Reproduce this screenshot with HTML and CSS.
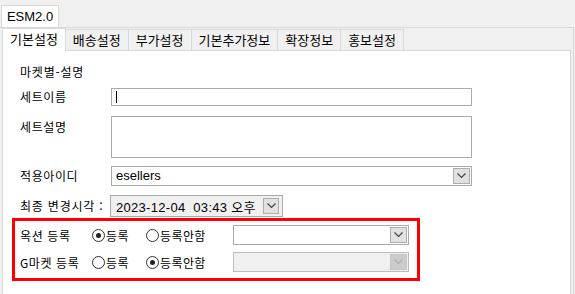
FILE: index.html
```html
<!DOCTYPE html>
<html lang="ko">
<head>
  <meta charset="UTF-8">
  <title>ESM2.0 - 기본설정</title>
  <link rel="stylesheet" href="styles.css">
</head>
<body>
  <div class="outer-tabs">
    <div class="outer-tab">ESM2.0</div>
  </div>

  <div class="outer-pane">
    <div class="tabs">
      <div class="tab active">기본설정</div>
      <div class="tab">배송설정</div>
      <div class="tab">부가설정</div>
      <div class="tab">기본추가정보</div>
      <div class="tab">확장정보</div>
      <div class="tab last">홍보설정</div>
    </div>

    <div class="pane">
      <div class="row title">마켓별-설명</div>

      <div class="row gap-8">
        <div class="label">세트이름</div>
        <div class="textbox"><span class="caret"></span></div>
      </div>

      <div class="row gap-10 top">
        <div class="label">세트설명</div>
        <div class="textarea"></div>
      </div>

      <div class="row gap-8">
        <div class="label">적용아이디</div>
        <div class="combo wide">
          <span class="combo-text">esellers</span>
          <span class="combo-btn">
            <svg width="9" height="6" viewBox="0 0 9 6"><polyline points="0.5,0.5 4.5,4.5 8.5,0.5" fill="none" stroke="#444" stroke-width="1.2"/></svg>
          </span>
        </div>
      </div>

      <div class="row gap-9">
        <div class="label short">최종 변경시각 :</div>
        <div class="datebox">
          <span class="date-text">2023-12-04  03:43 오후</span>
          <span class="combo-btn small">
            <svg width="9" height="6" viewBox="0 0 9 6"><polyline points="0.5,0.5 4.5,4.5 8.5,0.5" fill="none" stroke="#444" stroke-width="1.2"/></svg>
          </span>
        </div>
      </div>

      <div class="group">
        <div class="group-row">
          <div class="group-label">옥션 등록</div>
          <label class="radio first"><input type="radio" name="auction" checked>등록</label>
          <label class="radio second"><input type="radio" name="auction">등록안함</label>
          <div class="combo narrow">
            <span class="combo-text"></span>
            <span class="combo-btn">
              <svg width="9" height="6" viewBox="0 0 9 6"><polyline points="0.5,0.5 4.5,4.5 8.5,0.5" fill="none" stroke="#444" stroke-width="1.2"/></svg>
            </span>
          </div>
        </div>
        <div class="group-row">
          <div class="group-label">G마켓 등록</div>
          <label class="radio first"><input type="radio" name="gmarket">등록</label>
          <label class="radio second"><input type="radio" name="gmarket" checked>등록안함</label>
          <div class="combo narrow disabled">
            <span class="combo-text"></span>
            <span class="combo-btn">
              <svg width="9" height="6" viewBox="0 0 9 6"><polyline points="0.5,0.5 4.5,4.5 8.5,0.5" fill="none" stroke="#b0b0b0" stroke-width="1.2"/></svg>
            </span>
          </div>
        </div>
      </div>
    </div>
  </div>
</body>
</html>
```

FILE: styles.css
```css
body {
  margin: 0;
  width: 575px;
  height: 294px;
  overflow: hidden;
  background-color: #f0f0f0;
  font-family: "Liberation Sans", "Noto Sans CJK KR", sans-serif;
  font-size: 12px;
  color: #000;
}
.outer-tabs {
  display: flex;
  padding: 5px 0 0 1px;
}
.outer-tab {
  width: 56px;
  height: 21px;
  line-height: 21px;
  text-align: center;
  font-size: 13px;
  background-color: #fff;
  border: 1px solid #d9d9d9;
  border-bottom: none;
}
.outer-pane {
  height: 266px;
  margin-right: 1px;
  padding-left: 2px;
  border-top: 1px solid #d9d9d9;
  border-right: 1px solid #d9d9d9;
}
.tabs {
  display: flex;
  align-items: flex-end;
  height: 22px;
}
.tab {
  height: 20px;
  line-height: 20px;
  padding: 0 7px;
  border-top: 1px solid #d9d9d9;
  border-left: 1px solid #d9d9d9;
  font-family: "Noto Sans CJK KR", sans-serif;
  font-size: 13px;
}
.tab.last {
  border-right: 1px solid #d9d9d9;
}
.tab.active {
  position: relative;
  height: 22px;
  line-height: 19px;
  margin-bottom: -1px;
  padding: 0 7px;
  background-color: #fff;
  border-right: 1px solid #d9d9d9;
}
.tab.active + .tab {
  border-left: none;
}
.pane {
  height: 232px;
  margin-right: 2px;
  padding: 11px 0 0 9px;
  background-color: #fff;
  border: 1px solid #d9d9d9;
  border-bottom: none;
}
.row {
  display: flex;
  align-items: center;
  padding-left: 8px;
}
.row.top {
  align-items: flex-start;
}
.row.title {
  height: 18px;
  font-family: "Noto Sans CJK KR", sans-serif;
  letter-spacing: 0.8px;
}
.gap-8 { margin-top: 8px; }
.gap-9 { margin-top: 9px; }
.gap-10 { margin-top: 10px; }
.label {
  width: 91px;
  flex-shrink: 0;
  line-height: 18px;
  font-family: "Noto Sans CJK KR", sans-serif;
  letter-spacing: 0.6px;
}
.row.top .label {
  padding-top: 2px;
}
.label.short {
  width: 90px;
  letter-spacing: 0.8px;
}
.textbox {
  display: flex;
  align-items: center;
  box-sizing: border-box;
  width: 361px;
  height: 18px;
  padding-left: 4px;
  border: 1px solid #ababab;
}
.caret {
  width: 1px;
  height: 12px;
  background-color: #000;
}
.textarea {
  box-sizing: border-box;
  width: 361px;
  height: 42px;
  border: 1px solid #ababab;
}
.combo {
  display: flex;
  align-items: center;
  box-sizing: border-box;
  height: 20px;
  padding: 1px;
  background-color: #fff;
  border: 1px solid #ababab;
}
.combo.wide { width: 361px; }
.combo.narrow { width: 176px; }
.combo.disabled {
  background-color: #f0f0f0;
  border-color: #bcbcbc;
}
.combo-text {
  flex: 1;
  padding-left: 3px;
  font-size: 13px;
  line-height: 16px;
}
.combo-btn {
  display: flex;
  align-items: center;
  justify-content: center;
  box-sizing: border-box;
  width: 17px;
  height: 16px;
  background-color: #e1e1e1;
  border: 1px solid #adadad;
}
.combo.disabled .combo-btn {
  background-color: #cccccc;
  border-color: #c4c4c4;
}
.datebox {
  display: flex;
  align-items: center;
  box-sizing: border-box;
  width: 173px;
  height: 22px;
  padding-right: 3px;
  background-color: #f0f0f0;
  border: 1px solid #ababab;
}
.date-text {
  flex: 1;
  padding-left: 5px;
  font-size: 13px;
  letter-spacing: 0.3px;
  white-space: pre;
}
.combo-btn.small {
  width: 16px;
  height: 16px;
}
.group {
  box-sizing: border-box;
  width: 408px;
  margin-top: 1px;
  padding: 4px 8px 6px 5px;
  border: 3px solid #ff0000;
}
.group-row {
  display: flex;
  align-items: center;
  height: 20px;
}
.group-row + .group-row {
  margin-top: 7px;
}
.group-label {
  width: 72px;
  font-family: "Noto Sans CJK KR", sans-serif;
  letter-spacing: 0.6px;
}
.radio {
  display: flex;
  align-items: center;
  font-family: "Noto Sans CJK KR", sans-serif;
  letter-spacing: 0.4px;
}
.radio.first { width: 54px; }
.radio.second { width: 87px; }
.radio input {
  appearance: none;
  box-sizing: border-box;
  width: 13px;
  height: 13px;
  margin: 0 1px 0 0;
  border: 1px solid #333;
  border-radius: 50%;
  background-color: #fff;
  display: flex;
  align-items: center;
  justify-content: center;
}
.radio input:checked::after {
  content: "";
  width: 5px;
  height: 5px;
  border-radius: 50%;
  background-color: #222;
}
```
